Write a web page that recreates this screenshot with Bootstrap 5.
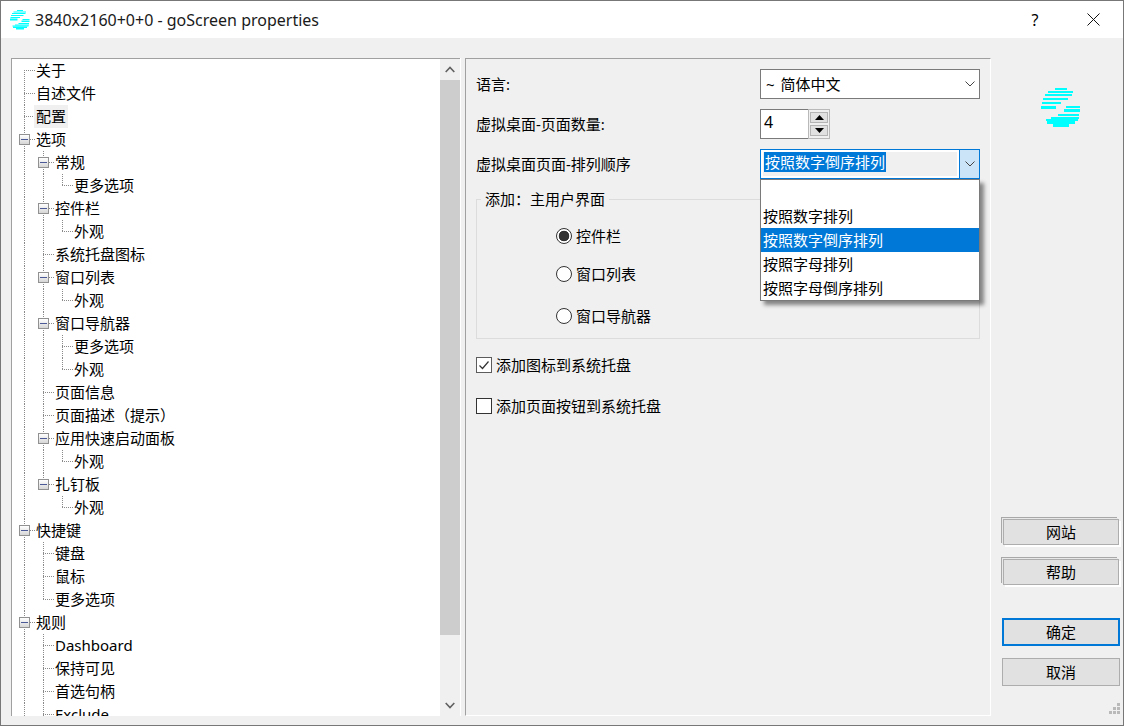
<!DOCTYPE html>
<html lang="zh">
<head>
<meta charset="utf-8">
<title>goScreen properties</title>
<link rel="stylesheet" href="https://cdn.jsdelivr.net/npm/bootstrap@5.3.0/dist/css/bootstrap.min.css">
<style>
:root{--ln:#8a8a8a}
html,body{margin:0;height:100%;overflow:hidden}
body{font:15px/22px "Noto Sans","Noto Sans CJK SC",sans-serif;color:#000;background:#f0f0f0}
.win{width:1124px;height:726px;border:1px solid #777;background:#f0f0f0}
.ttl{height:37px;background:#fff;padding-left:9px}
.ttl-t{margin-left:5px;font-size:16px;color:#1a1a1a}
.ttl-q{width:56px;text-align:center;font-size:16px}
.ttl-x{width:60px}
.mainrow{height:678px;padding:20px 0 0 10px}
.treebox{width:449px;height:658px;border-top:1px solid #a0a0a0;border-left:1px solid #a0a0a0;background:#fff}
.treein{flex:1;overflow:hidden;padding-left:5px}
.trow{height:23px;white-space:nowrap}
.tc{width:19px;height:23px;flex:none;background-repeat:no-repeat}
.tv{background-image:repeating-linear-gradient(to bottom,var(--ln) 0 1px,transparent 1px 2px);background-size:1px 100%;background-position:7px 0}
.tt,.tl,.tf{background-image:repeating-linear-gradient(to bottom,var(--ln) 0 1px,transparent 1px 2px),repeating-linear-gradient(to right,var(--ln) 0 1px,transparent 1px 2px);background-position:7px 0,7px 11px;background-size:1px 100%,11px 1px}
.tl{background-size:1px 12px,11px 1px}
.tf{background-position:7px 11px,7px 11px;background-size:1px 12px,11px 1px}
.tx{width:11px;height:11px;margin-left:2px;margin-top:6px;border:1px solid #919191;background:linear-gradient(#fff,#d6d6d6);display:flex;align-items:center;justify-content:center}
.tx i{display:block;width:7px;height:1px;background:#4b5a96}
.tlab{padding:0 2px;margin-left:-2px;height:23px}
.tsel{background:#f0f0f0}
.scrl{width:20px;background:#f0f0f0}
.scrl-a{height:21px}
.scrl-th{height:555px;background:#cdcdcd}
.gap5{width:5px;border-left:1px solid #fff}
.pane{width:526px;height:658px;border-top:1px solid #a0a0a0;border-left:1px solid #a0a0a0;border-right:1px solid #fff;border-bottom:1px solid #fff;padding:10px 9px 0 10px}
.frow{height:30px;margin-bottom:10px}
.flab{width:284px;flex:none}
.cmb{width:220px;height:30px;border:1px solid #7a7a7a;background:#fff;padding-left:5px}
.cmb-t{word-spacing:2px}
.cmb.act{border-color:#0078d7;padding:2px 0 2px 2px;position:relative}
.cmb-f{flex:1;height:24px;margin-right:2px;padding-left:1px;background:#f0f0f0;line-height:20px}
.cmb-s{background:#0078d7;color:#fff;padding:0 1px;height:20px;display:inline-block}
.cmb-b{flex:none;width:20px;height:28px;margin-top:-2px;background:#cce4f7;border-left:1px solid #0078d7}
.spin{width:70px;height:30px}
.spin-i{width:48px;border:1px solid #7a7a7a;border-right:0;background:#fff;padding-left:3px;line-height:25px;font-size:16px}
.spin-b{width:22px;border:1px solid #b9b9b9;background:#f0f0f0;padding:2px 1px;gap:2px}
.spin-b div{flex:1;background:#e1e1e1;border:1px solid #b4b4b4}
.ddm{position:absolute;display:block;top:29px;left:-1px;width:220px;min-width:0;padding:0;border:1px solid #7a7a7a;border-radius:0;box-shadow:4px 4px 4px rgba(0,0,0,.45);z-index:5;margin:0}
.ddm .dropdown-item{height:24px;padding:0 2px;line-height:24px;color:#000;font-size:15px}
.ddm .dropdown-item.active{background:#0078d7;color:#fff}
.grp{border:1px solid #dcdcdc;width:504px;height:151px;margin-top:-1px;padding:0;min-width:0;display:block}
.grp legend{float:none;width:auto;font-size:15px;line-height:22px;padding:0 4px;margin:0 0 0 4px}
.rlist{padding-left:79px}
.form-check-input.rd,.form-check-input.ck{width:16px;height:16px;margin:0;flex:none;float:none;background-color:#fff;border:1px solid #333;box-shadow:none}
.form-check-input.rd:checked{background:radial-gradient(circle,#333 0 5px,#fff 5.6px);border-color:#333}
.form-check-input.ck{border-radius:0}
.form-check-input.ck:checked{background-color:#fff;border-color:#5c5c5c;background-image:url("data:image/svg+xml,%3csvg xmlns='http://www.w3.org/2000/svg' viewBox='0 0 14 14'%3e%3cpath d='M2.5 7.5l3 3 6-7' fill='none' stroke='%23333' stroke-width='1.2'/%3e%3c/svg%3e");background-size:14px 14px}
.rrow{height:22px;gap:4px}
.r1{margin-top:15px}.r2{margin-top:16px}.r3{margin-top:20px}
.crow{height:22px;gap:4px}
.c1{margin-top:15px}.c2{margin-top:19px}
.side{width:132px;height:678px;margin-top:-20px}
.logo{margin:50px 0 0 50px;width:40px;height:40px}
.sbtn{width:118px;height:28px;margin-left:11px;padding:0;font-size:15px;line-height:26px;color:#000;background:#e1e1e1;border:1px solid #adadad;border-radius:0}
.sbtn:hover{background:#e1e1e1;color:#000}
.sb-o{box-shadow:-1px -1px 0 0 #e8e8e8,-2px -2px 0 0 #a8a8a8,2px 2px 0 0 #fff;width:116px;margin-left:12px;height:26px;padding-bottom:1px;line-height:22px}
.sb-d{border:2px solid #0078d7;line-height:24px}
.m1{margin-top:391px}.m2{margin-top:14px}.m3{margin-top:33px}.m4{margin-top:12px}
.grip{margin:auto 2px 1px auto;line-height:0}
</style>
</head>
<body>
<div class="win d-flex flex-column">
  <div class="ttl d-flex align-items-center">
    <svg width="20" height="20" viewBox="0 0 40 40" fill="#00ffff"><rect x="14" y="0" width="12" height="2"/><rect x="7" y="3" width="25" height="2"/><rect x="4" y="6" width="27" height="2"/><rect x="2" y="10" width="25" height="2"/><rect x="1" y="14" width="19" height="2"/><rect x="0" y="17" width="15" height="4"/><rect x="25" y="18" width="14" height="2"/><rect x="23" y="21" width="16" height="3"/><rect x="17" y="26" width="21" height="2"/><rect x="10" y="29" width="28" height="2"/><rect x="5" y="31" width="32" height="2"/><rect x="6" y="33" width="28" height="3"/><rect x="12" y="36" width="16" height="3"/></svg>
    <span class="ttl-t flex-grow-1">3840x2160+0+0 - goScreen properties</span>
    <span class="ttl-q">?</span>
    <span class="ttl-x d-flex justify-content-center"><svg width="13" height="13" viewBox="0 0 13 13"><path d="M.5.5l12 12M12.5.5l-12 12" stroke="#111" fill="none"/></svg></span>
  </div>
  <div class="mainrow d-flex">
    <div class="treebox d-flex">
      <div class="treein">
        <div class="trow d-flex"><span class="tc tf"></span><span class="tlab">关于</span></div>
        <div class="trow d-flex"><span class="tc tt"></span><span class="tlab">自述文件</span></div>
        <div class="trow d-flex"><span class="tc tt"></span><span class="tlab tsel">配置</span></div>
        <div class="trow d-flex"><span class="tc tt"><span class="tx"><i></i></span></span><span class="tlab">选项</span></div>
        <div class="trow d-flex"><span class="tc tv"></span><span class="tc tt"><span class="tx"><i></i></span></span><span class="tlab">常规</span></div>
        <div class="trow d-flex"><span class="tc tv"></span><span class="tc tv"></span><span class="tc tl"></span><span class="tlab">更多选项</span></div>
        <div class="trow d-flex"><span class="tc tv"></span><span class="tc tt"><span class="tx"><i></i></span></span><span class="tlab">控件栏</span></div>
        <div class="trow d-flex"><span class="tc tv"></span><span class="tc tv"></span><span class="tc tl"></span><span class="tlab">外观</span></div>
        <div class="trow d-flex"><span class="tc tv"></span><span class="tc tt"></span><span class="tlab">系统托盘图标</span></div>
        <div class="trow d-flex"><span class="tc tv"></span><span class="tc tt"><span class="tx"><i></i></span></span><span class="tlab">窗口列表</span></div>
        <div class="trow d-flex"><span class="tc tv"></span><span class="tc tv"></span><span class="tc tl"></span><span class="tlab">外观</span></div>
        <div class="trow d-flex"><span class="tc tv"></span><span class="tc tt"><span class="tx"><i></i></span></span><span class="tlab">窗口导航器</span></div>
        <div class="trow d-flex"><span class="tc tv"></span><span class="tc tv"></span><span class="tc tt"></span><span class="tlab">更多选项</span></div>
        <div class="trow d-flex"><span class="tc tv"></span><span class="tc tv"></span><span class="tc tl"></span><span class="tlab">外观</span></div>
        <div class="trow d-flex"><span class="tc tv"></span><span class="tc tt"></span><span class="tlab">页面信息</span></div>
        <div class="trow d-flex"><span class="tc tv"></span><span class="tc tt"></span><span class="tlab">页面描述（提示）</span></div>
        <div class="trow d-flex"><span class="tc tv"></span><span class="tc tt"><span class="tx"><i></i></span></span><span class="tlab">应用快速启动面板</span></div>
        <div class="trow d-flex"><span class="tc tv"></span><span class="tc tv"></span><span class="tc tl"></span><span class="tlab">外观</span></div>
        <div class="trow d-flex"><span class="tc tv"></span><span class="tc tl"><span class="tx"><i></i></span></span><span class="tlab">扎钉板</span></div>
        <div class="trow d-flex"><span class="tc tv"></span><span class="tc"></span><span class="tc tl"></span><span class="tlab">外观</span></div>
        <div class="trow d-flex"><span class="tc tt"><span class="tx"><i></i></span></span><span class="tlab">快捷键</span></div>
        <div class="trow d-flex"><span class="tc tv"></span><span class="tc tt"></span><span class="tlab">键盘</span></div>
        <div class="trow d-flex"><span class="tc tv"></span><span class="tc tt"></span><span class="tlab">鼠标</span></div>
        <div class="trow d-flex"><span class="tc tv"></span><span class="tc tl"></span><span class="tlab">更多选项</span></div>
        <div class="trow d-flex"><span class="tc tt"><span class="tx"><i></i></span></span><span class="tlab">规则</span></div>
        <div class="trow d-flex"><span class="tc tv"></span><span class="tc tt"></span><span class="tlab">Dashboard</span></div>
        <div class="trow d-flex"><span class="tc tv"></span><span class="tc tt"></span><span class="tlab">保持可见</span></div>
        <div class="trow d-flex"><span class="tc tv"></span><span class="tc tt"></span><span class="tlab">首选句柄</span></div>
        <div class="trow d-flex"><span class="tc tv"></span><span class="tc tt"></span><span class="tlab">Exclude</span></div>
      </div>
      <div class="scrl d-flex flex-column">
        <div class="scrl-a d-flex align-items-center justify-content-center"><svg width="10" height="7" viewBox="0 0 10 7"><path d="M.7 6L5 1.5 9.3 6" fill="none" stroke="#606060" stroke-width="1.6"/></svg></div>
        <div class="scrl-th"></div>
        <div class="flex-grow-1"></div>
        <div class="scrl-a d-flex align-items-center justify-content-center"><svg width="10" height="7" viewBox="0 0 10 7"><path d="M.7 1L5 5.5 9.3 1" fill="none" stroke="#606060" stroke-width="1.6"/></svg></div>
      </div>
    </div>
    <div class="gap5"></div>
    <div class="pane">
      <div class="frow d-flex align-items-center">
        <span class="flab">语言:</span>
        <div class="cmb d-flex align-items-center">
          <span class="cmb-t flex-grow-1">~ 简体中文</span>
          <svg class="me-1" width="10" height="6" viewBox="0 0 10 6"><path d="M.5.5L5 5 9.5.5" fill="none" stroke="#444"/></svg>
        </div>
      </div>
      <div class="frow d-flex align-items-center">
        <span class="flab">虚拟桌面-页面数量:</span>
        <div class="spin d-flex">
          <div class="spin-i">4</div>
          <div class="spin-b d-flex flex-column">
            <div class="d-flex align-items-center justify-content-center"><svg width="9" height="5" viewBox="0 0 9 5"><path d="M4.5 0L9 5H0z"/></svg></div>
            <div class="d-flex align-items-center justify-content-center"><svg width="9" height="5" viewBox="0 0 9 5"><path d="M0 0h9L4.5 5z"/></svg></div>
          </div>
        </div>
      </div>
      <div class="frow d-flex align-items-center">
        <span class="flab">虚拟桌面页面-排列顺序</span>
        <div class="cmb act d-flex">
          <div class="cmb-f"><span class="cmb-s">按照数字倒序排列</span></div>
          <div class="cmb-b d-flex align-items-center justify-content-center"><svg width="10" height="6" viewBox="0 0 10 6"><path d="M.5.5L5 5 9.5.5" fill="none" stroke="#444"/></svg></div>
          <ul class="dropdown-menu ddm list-unstyled">
            <li><span class="dropdown-item"></span></li>
            <li><span class="dropdown-item">按照数字排列</span></li>
            <li><span class="dropdown-item active">按照数字倒序排列</span></li>
            <li><span class="dropdown-item">按照字母排列</span></li>
            <li><span class="dropdown-item">按照字母倒序排列</span></li>
          </ul>
        </div>
      </div>
      <fieldset class="grp">
        <legend>添加：主用户界面</legend>
        <div class="rlist">
          <div class="rrow r1 d-flex align-items-center"><input class="form-check-input rd" type="radio" name="ui" checked><span>控件栏</span></div>
          <div class="rrow r2 d-flex align-items-center"><input class="form-check-input rd" type="radio" name="ui"><span>窗口列表</span></div>
          <div class="rrow r3 d-flex align-items-center"><input class="form-check-input rd" type="radio" name="ui"><span>窗口导航器</span></div>
        </div>
      </fieldset>
      <div class="crow c1 d-flex align-items-center"><input class="form-check-input ck" type="checkbox" checked><span>添加图标到系统托盘</span></div>
      <div class="crow c2 d-flex align-items-center"><input class="form-check-input ck" type="checkbox"><span>添加页面按钮到系统托盘</span></div>
    </div>
    <div class="side d-flex flex-column">
      <div class="logo">
        <svg width="40" height="40" viewBox="0 0 40 40" fill="#00ffff"><rect x="14" y="0" width="12" height="2"/><rect x="7" y="3" width="25" height="2"/><rect x="4" y="6" width="27" height="2"/><rect x="2" y="10" width="25" height="2"/><rect x="1" y="14" width="19" height="2"/><rect x="0" y="18" width="15" height="3"/><rect x="25" y="18" width="14" height="2"/><rect x="23" y="21" width="16" height="3"/><rect x="17" y="26" width="21" height="2"/><rect x="10" y="29" width="28" height="2"/><rect x="5" y="31" width="32" height="2"/><rect x="6" y="33" width="28" height="3"/><rect x="12" y="36" width="16" height="3"/></svg>
      </div>
      <button type="button" class="btn sbtn sb-o m1">网站</button>
      <button type="button" class="btn sbtn sb-o m2">帮助</button>
      <button type="button" class="btn sbtn sb-d m3">确定</button>
      <button type="button" class="btn sbtn m4">取消</button>
      <div class="grip"><svg width="12" height="12" viewBox="0 0 12 12" fill="#b9b9b9"><rect x="8" y="0" width="3" height="3"/><rect x="4" y="4" width="3" height="3"/><rect x="8" y="4" width="3" height="3"/><rect x="0" y="8" width="3" height="3"/><rect x="4" y="8" width="3" height="3"/><rect x="8" y="8" width="3" height="3"/></svg></div>
    </div>
  </div>
</div>
<script src="https://cdn.jsdelivr.net/npm/bootstrap@5.3.0/dist/js/bootstrap.bundle.min.js"></script>
</body>
</html>
